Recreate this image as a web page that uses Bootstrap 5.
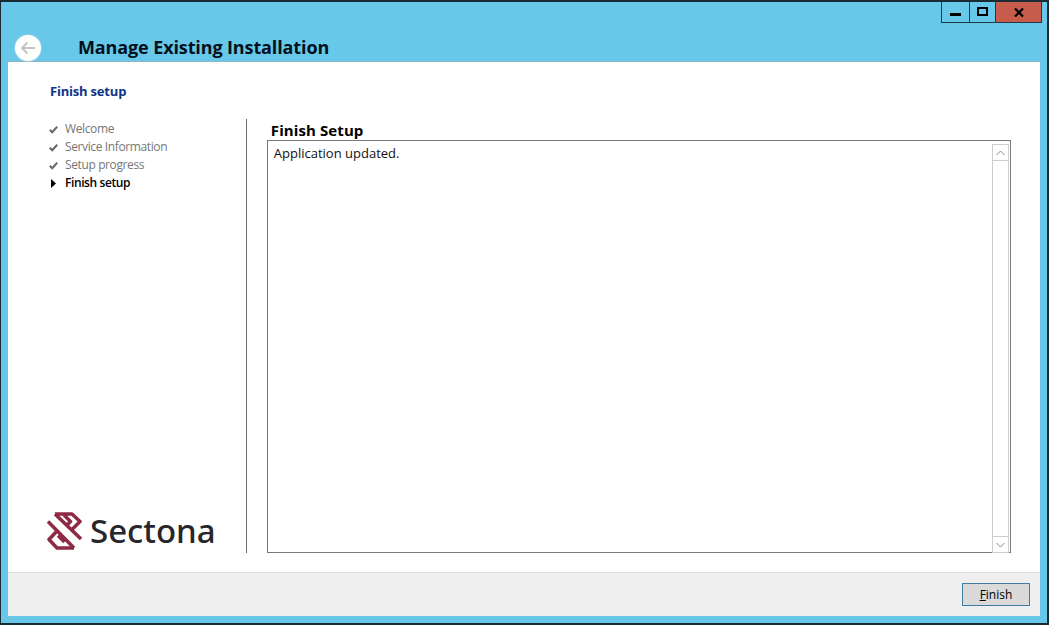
<!DOCTYPE html>
<html lang="en"><head><meta charset="utf-8"><title>Manage Existing Installation</title>
<link href="https://cdn.jsdelivr.net/npm/bootstrap@5.3.0/dist/css/bootstrap.min.css" rel="stylesheet">
<style>
html,body{height:625px;width:1049px;overflow:hidden;margin:0;background:#67c8ea;font-family:"Open Sans","Noto Sans",sans-serif;color:#000}
.wnd{width:1049px;height:625px;border:solid #1c2b33;border-width:2px 2px 2px 1px;background:#67c8ea;padding:0 7px 7px 7px}
.chrome{height:59px;position:relative}
.ctrls{height:21px;margin-right:-2px}
.ctl{height:21px;border:1px solid #1e3a4a;border-top:0;display:flex;align-items:center;justify-content:center}
.ctl-min{width:29px}.ctl-max{width:26px;border-left:0}.ctl-close{width:46px;background:#c75b4c;border-left:0}
.backcirc{position:absolute;left:7px;top:33px;width:26px;height:26px;border-radius:50%;background:#fff;box-shadow:0 0 2px #ddd;display:flex;align-items:center;justify-content:center;z-index:2}
.ttl{font-size:18px;font-weight:700;line-height:24px;position:absolute;left:70px;top:33px;color:#04101c;letter-spacing:-.12px}
.pane{height:511px;background:#fff;border-top:1px solid #8fb6c4;padding:20px 29px 19px 42px}
.subhead{font-size:13px;font-weight:700;color:#0f3488;line-height:18px;letter-spacing:-.2px}
.mainrow{margin-top:19px;height:434px}
.side{width:197px;border-right:1px solid #6e6e6e}
.steps{padding-top:1px}
.step{height:18px;font-size:12px;line-height:18px;color:#777;display:flex;align-items:center;letter-spacing:-.38px}
.step svg{width:9px;height:9px;margin-right:6px;flex:none;margin-left:-1px;margin-right:7px}
.step-now{color:#000;font-weight:600;letter-spacing:-.4px}
.brand{display:flex;align-items:center;gap:8px;margin-left:-3px;margin-bottom:3px}
.brandname{font-family:"Noto Sans","Open Sans",sans-serif;font-size:33px;font-weight:500;line-height:38px;color:#26262b}
.rightcol{margin-left:20px;width:745px}
.fshead{font-size:15px;font-weight:700;line-height:16px;padding-left:4px;margin-top:3px;padding-bottom:2px;letter-spacing:.1px}
.tbox{height:413px;border:1px solid #7a7a7a;padding:3px 1px 1px 6px;font-size:13px;line-height:18px;color:#111}
.sbar{width:17px;height:409px;border:1px solid #cdcdcd;display:flex;flex-direction:column;justify-content:space-between}
.sarrow{height:16px;display:flex;align-items:center;justify-content:center}
.sarrow-top{border-bottom:1px solid #cdcdcd}.sarrow-bot{border-top:1px solid #cdcdcd}
.foot{height:44px;background:#efefef;border-top:1px solid #dcdcdc;padding-right:10px}
.finbtn{width:68px;height:23px;padding:0;border:1px solid #3f7ba3;background:#dadada;border-radius:0;font-size:12px;color:#000;line-height:20px}
.finbtn:hover{background:#dadada}
</style></head><body>
<div class="wnd d-flex flex-column">
 <div class="chrome">
  <div class="ctrls d-flex justify-content-end">
   <div class="ctl ctl-min"><svg width="11" height="4" class="mt-1"><rect width="11" height="3" y="1" fill="#000"/></svg></div>
   <div class="ctl ctl-max"><svg width="11" height="10"><rect x="1" y="1" width="9" height="7" fill="none" stroke="#000" stroke-width="2"/></svg></div>
   <div class="ctl ctl-close"><svg width="10" height="9" viewBox="0 0 10 9"><path d="M1 .5 9 8.5M9 .5 1 8.5" stroke="#000" stroke-width="2.2" fill="none"/></svg></div>
  </div>
  <div class="backcirc"><svg width="16" height="14" viewBox="0 0 16 14"><path d="M15 7H2M7.500 1.500 2 7l5.500 5.500" stroke="#c4c4c4" stroke-width="2" fill="none"/></svg></div>
  <div class="ttl">Manage Existing Installation</div>
 </div>
 <div class="pane">
  <div class="subhead">Finish setup</div>
  <div class="mainrow d-flex">
   <div class="side d-flex flex-column justify-content-between">
    <div class="steps">
     <div class="step"><svg viewBox="0 0 9 9"><path d="M.8 4.800 3.200 7.200 8.200 1.800" stroke="#666" stroke-width="2" fill="none"/></svg>Welcome</div>
     <div class="step"><svg viewBox="0 0 9 9"><path d="M.8 4.800 3.200 7.200 8.200 1.800" stroke="#666" stroke-width="2" fill="none"/></svg>Service Information</div>
     <div class="step"><svg viewBox="0 0 9 9"><path d="M.8 4.800 3.200 7.200 8.200 1.800" stroke="#666" stroke-width="2" fill="none"/></svg>Setup progress</div>
     <div class="step step-now"><svg viewBox="0 0 9 9"><path d="M2 0 7 4.500 2 9z" fill="#000"/></svg>Finish setup</div>
    </div>
    <div class="brand">
     <svg width="35" height="38" viewBox="0 0 35 38"><g fill="none" stroke="#8e2a43" stroke-width="3.500" stroke-linejoin="round"><path d="M8 2H25L33 9.500 24 18.500M17 3 23.500 9.500 19 14M8 2 34 27M1 9.500 27 36"/><path d="M10 19 2 27.500 10 36H27M11 23.500 17.500 30"/></g></svg>
     <span class="brandname">Sectona</span>
    </div>
   </div>
   <div class="rightcol d-flex flex-column">
    <div class="fshead">Finish Setup</div>
    <div class="tbox d-flex justify-content-between">
     <span>Application updated.</span>
     <div class="sbar"><div class="sarrow sarrow-top"><svg width="9" height="6"><path d="M.5 5 4.500 1 8.500 5" stroke="#888" fill="none"/></svg></div><div class="sarrow sarrow-bot"><svg width="9" height="6"><path d="M.5 1 4.500 5 8.500 1" stroke="#888" fill="none"/></svg></div></div>
    </div>
   </div>
  </div>
 </div>
 <div class="foot d-flex align-items-center justify-content-end">
  <button type="button" class="btn finbtn"><u>F</u>inish</button>
 </div>
</div>
</body></html>
